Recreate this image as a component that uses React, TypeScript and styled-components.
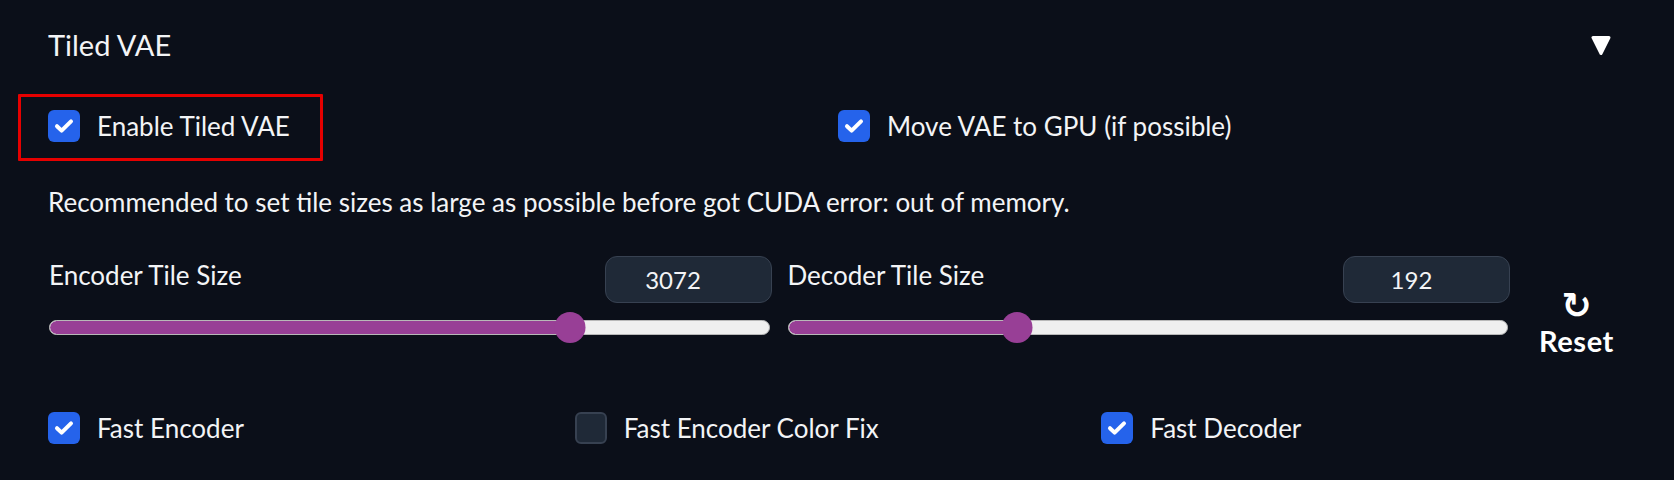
import React from "react";
import styled, { createGlobalStyle } from "styled-components";

const GlobalStyle = createGlobalStyle`
  html, body {
    margin: 0;
    padding: 0;
    background: #0b0f19;
  }
  body {
    font-family: "Lato", "DejaVu Sans", sans-serif;
    color: #f3f4f6;
  }
`;

const Panel = styled.div`
  width: 1674px;
  height: 480px;
  box-sizing: border-box;
  padding: 27px 46px 0 48px;
  background: #0b0f19;
  display: flex;
  flex-direction: column;
  overflow: hidden;
`;

const Header = styled.div`
  display: flex;
  align-items: center;
  justify-content: space-between;
  height: 36px;
  padding-right: 17px;
`;

const Title = styled.span`
  font-size: 29px;
  line-height: 36px;
  font-weight: 400;
  color: #f3f4f6;
`;

const Section = styled.div<{ $top: number }>`
  margin-top: ${(p) => p.$top}px;
`;

const Columns = styled.div<{ $cols: number }>`
  display: grid;
  grid-template-columns: repeat(${(p) => p.$cols}, 1fr);
  align-items: center;
`;

const CheckLabel = styled.label`
  position: relative;
  display: flex;
  width: fit-content;
  align-items: center;
  gap: 17px;
  height: 32px;
  font-size: 26px;
  line-height: 32px;
  color: #f3f4f6;
  cursor: pointer;
`;

const Box = styled.span<{ $checked: boolean }>`
  width: 32px;
  height: 32px;
  box-sizing: border-box;
  border-radius: 6px;
  flex: none;
  display: flex;
  align-items: center;
  justify-content: center;
  background: ${(p) => (p.$checked ? "#2563eb" : "#1f2937")};
  border: ${(p) => (p.$checked ? "none" : "2px solid #374151")};
`;

const Highlight = styled.span`
  position: absolute;
  left: -30px;
  top: -16px;
  width: 305px;
  height: 67px;
  box-sizing: border-box;
  border: 3px solid #e60000;
  border-radius: 1px;
  pointer-events: none;
`;

const Note = styled.p`
  margin: 0;
  font-size: 26px;
  line-height: 32px;
  color: #f3f4f6;
`;

const SliderRow = styled.div`
  display: grid;
  grid-template-columns: 1fr 1fr 103px;
  column-gap: 15px;
  align-items: start;
`;

const SliderBlock = styled.div`
  display: flex;
  flex-direction: column;
`;

const SliderHead = styled.div`
  display: flex;
  justify-content: space-between;
  align-items: flex-start;
`;

const SliderLabel = styled.span`
  font-size: 26px;
  line-height: 32px;
  margin-top: 3px;
  margin-left: 1px;
  color: #f3f4f6;
`;

const NumberBox = styled.div`
  width: 167px;
  height: 47px;
  box-sizing: border-box;
  border-radius: 12px;
  background: #1f2937;
  border: 1.5px solid #374151;
  display: flex;
  align-items: center;
  justify-content: center;
  padding-right: 30px;
  font-size: 24px;
  color: #f3f4f6;
`;

const TrackArea = styled.div`
  position: relative;
  height: 31px;
  margin: 9px 2px 0 1px;
  display: flex;
  align-items: center;
`;

const Track = styled.div`
  position: relative;
  width: 100%;
  height: 15px;
  box-sizing: border-box;
  border-radius: 8px;
  background: #efefef;
  border: 1.5px solid #b8b8b8;
  overflow: hidden;
`;

const Fill = styled.div`
  position: absolute;
  left: 0;
  top: 0;
  bottom: 0;
  background: #983f96;
  border-radius: 8px 0 0 8px;
`;

const Thumb = styled.div`
  position: absolute;
  top: 0;
  width: 31px;
  height: 31px;
  border-radius: 50%;
  background: #983f96;
  transform: translateX(-50%);
`;

const ResetButton = styled.button`
  margin-top: 35px;
  background: transparent;
  border: none;
  padding: 0;
  color: #ffffff;
  font-family: "Lato", "DejaVu Sans", sans-serif;
  font-weight: 700;
  font-size: 29px;
  letter-spacing: 0.6px;
  line-height: 27px;
  display: flex;
  flex-direction: column;
  align-items: center;
  gap: 6px;
  cursor: pointer;
`;

const ResetGlyph = styled.span`
  font-family: "DejaVu Sans", sans-serif;
  font-weight: 700;
  font-size: 36px;
  line-height: 30px;
  letter-spacing: 0;
`;

const Caret = () => (
  <svg width="20" height="21" viewBox="0 0 20 21">
    <path d="M2 2.5 L18 2.5 L10 18.5 Z" fill="#fff" stroke="#fff" strokeWidth="3" strokeLinejoin="round" />
  </svg>
);

const Tick = () => (
  <svg width="32" height="32" viewBox="0 0 32 32">
    <path d="M9 16.2 L13.6 20.6 L23 11.4" fill="none" stroke="#fff" strokeWidth="4" strokeLinecap="round" strokeLinejoin="round" />
  </svg>
);

type CheckProps = { label: string; checked: boolean; highlight?: boolean };

const Check = ({ label, checked, highlight }: CheckProps) => (
  <CheckLabel>
    <Box $checked={checked}>{checked && <Tick />}</Box>
    <span>{label}</span>
    {highlight && <Highlight />}
  </CheckLabel>
);

type SliderProps = { label: string; value: number; min: number; max: number };

const Slider = ({ label, value, min, max }: SliderProps) => {
  const frac = (value - min) / (max - min);
  const pos = `calc(15.5px + (100% - 31px) * ${frac})`;
  return (
    <SliderBlock>
      <SliderHead>
        <SliderLabel>{label}</SliderLabel>
        <NumberBox>{value}</NumberBox>
      </SliderHead>
      <TrackArea>
        <Track>
          <Fill style={{ width: pos }} />
        </Track>
        <Thumb style={{ left: pos }} />
      </TrackArea>
    </SliderBlock>
  );
};

export default function App() {
  return (
    <>
      <GlobalStyle />
      <Panel>
        <Header>
          <Title>Tiled VAE</Title>
          <Caret />
        </Header>
        <Section $top={47}>
          <Columns $cols={2}>
            <Check label="Enable Tiled VAE" checked highlight />
            <Check label="Move VAE to GPU (if possible)" checked />
          </Columns>
        </Section>
        <Section $top={44}>
          <Note>Recommended to set tile sizes as large as possible before got CUDA error: out of memory.</Note>
        </Section>
        <Section $top={38}>
          <SliderRow>
            <Slider label="Encoder Tile Size" value={3072} min={256} max={4096} />
            <Slider label="Decoder Tile Size" value={192} min={48} max={512} />
            <ResetButton>
              <ResetGlyph>↻</ResetGlyph>
              <span>Reset</span>
            </ResetButton>
          </SliderRow>
        </Section>
        <Section $top={58}>
          <Columns $cols={3}>
            <Check label="Fast Encoder" checked />
            <Check label="Fast Encoder Color Fix" checked={false} />
            <Check label="Fast Decoder" checked />
          </Columns>
        </Section>
      </Panel>
    </>
  );
}
